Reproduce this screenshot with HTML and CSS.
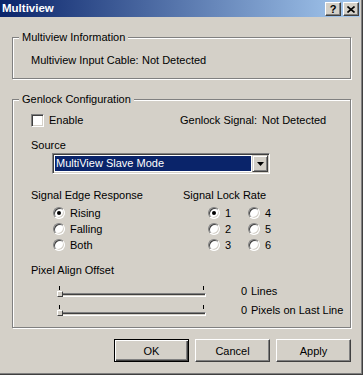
FILE: index.html
```html
<!DOCTYPE html>
<html lang="en">
<head>
    <meta charset="UTF-8">
    <meta name="viewport" content="width=device-width, initial-scale=1.0">
    <title>Multiview</title>
    <link rel="stylesheet" href="styles.css">
</head>
<body>
    <div class="window">
        <div class="titlebar">
            <span class="title">Multiview</span>
            <div class="caption-btns">
                <span class="caption-btn help">?</span>
                <span class="caption-btn close">
                    <svg width="8" height="7" viewBox="0 0 8 7"><path d="M0.5 0.5 L7.5 6.5 M7.5 0.5 L0.5 6.5" stroke="#000" stroke-width="1.6" fill="none"/></svg>
                </span>
            </div>
        </div>

        <div class="content">
            <fieldset class="group info">
                <legend>Multiview Information</legend>
                <div class="status-row">
                    <span class="status-label cable">Multiview Input Cable:</span>
                    <span>Not Detected</span>
                </div>
            </fieldset>

            <fieldset class="group genlock">
                <legend>Genlock Configuration</legend>
                <div class="group-body">
                    <div class="enable-row">
                        <span class="check-item"><span class="checkbox"></span>Enable</span>
                        <span class="status-label signal">Genlock Signal:</span>
                        <span>Not Detected</span>
                    </div>

                    <div class="field-label source-label">Source</div>
                    <div class="combo">
                        <div class="combo-value"><span>MultiView Slave Mode</span></div>
                        <span class="combo-btn">
                            <svg width="7" height="4" viewBox="0 0 7 4"><polygon points="0,0 7,0 3.5,4" fill="#000"/></svg>
                        </span>
                    </div>

                    <div class="options">
                        <div class="option-col edge">
                            <div class="field-label">Signal Edge Response</div>
                            <div class="radio-list">
                                <span class="radio-item"><span class="radio on"></span>Rising</span>
                                <span class="radio-item"><span class="radio"></span>Falling</span>
                                <span class="radio-item"><span class="radio"></span>Both</span>
                            </div>
                        </div>
                        <div class="option-col lock">
                            <div class="field-label">Signal Lock Rate</div>
                            <div class="radio-grid">
                                <span class="radio-item"><span class="radio on"></span>1</span>
                                <span class="radio-item"><span class="radio"></span>4</span>
                                <span class="radio-item"><span class="radio"></span>2</span>
                                <span class="radio-item"><span class="radio"></span>5</span>
                                <span class="radio-item"><span class="radio"></span>3</span>
                                <span class="radio-item"><span class="radio"></span>6</span>
                            </div>
                        </div>
                    </div>

                    <div class="field-label offset-label">Pixel Align Offset</div>
                    <div class="slider-row first">
                        <div class="slider">
                            <div class="ticks"><span></span><span></span></div>
                            <div class="track"><span class="thumb"></span></div>
                        </div>
                        <span class="slider-value">0</span>
                        <span>Lines</span>
                    </div>
                    <div class="slider-row">
                        <div class="slider">
                            <div class="ticks"><span></span><span></span></div>
                            <div class="track"><span class="thumb"></span></div>
                        </div>
                        <span class="slider-value">0</span>
                        <span>Pixels on Last Line</span>
                    </div>
                </div>
            </fieldset>

            <div class="buttons">
                <button class="btn default">OK</button>
                <button class="btn">Cancel</button>
                <button class="btn">Apply</button>
            </div>
        </div>
    </div>
</body>
</html>
```

FILE: styles.css
```css
* {
    box-sizing: border-box;
}
body {
    margin: 0;
    background: #d4d0c8;
    font-family: "Liberation Sans", Arial, sans-serif;
    font-size: 11px;
    line-height: 13px;
    color: #000;
}
.window {
    width: 363px;
    height: 375px;
    border-right: 1px solid #404040;
    border-bottom: 1px solid #404040;
    box-shadow: inset -1px -1px 0 #808080;
}
.titlebar {
    height: 17px;
    margin-right: 2px;
    padding: 0 1px 0 2px;
    display: flex;
    justify-content: space-between;
    background: linear-gradient(to right, #0a246a, #a6caf0);
}
.title {
    color: #fff;
    font-weight: bold;
    font-size: 11.5px;
    line-height: 17px;
}
.caption-btns {
    display: flex;
    gap: 2px;
    padding-top: 2px;
}
.caption-btn {
    width: 16px;
    height: 14px;
    display: flex;
    align-items: center;
    justify-content: center;
    background: #d4d0c8;
    border: 1px solid;
    border-color: #fff #404040 #404040 #fff;
    box-shadow: inset -1px -1px 0 #808080;
    font-weight: bold;
    font-size: 11px;
}
.content {
    padding: 14px 0 0 12px;
}
.group {
    width: 339px;
    margin: 0;
    padding: 0 0 0 6px;
    min-width: 0;
    border: 1px solid #808080;
    box-shadow: 1px 1px 0 #fff, inset 1px 1px 0 #fff;
}
.group legend {
    padding: 0 3px;
    line-height: 13px;
    background: #d4d0c8;
}
.genlock {
    margin-top: 14px;
}
.status-row {
    display: flex;
    padding: 10px 0 11px 12px;
}
.status-label.cable {
    width: 111px;
}
.status-label.signal {
    width: 82px;
}
.group-body {
    padding: 8px 0 10px 12px;
}
.enable-row {
    display: flex;
    align-items: center;
    height: 13px;
}
.check-item {
    width: 149px;
    display: flex;
    align-items: center;
    gap: 5px;
}
.checkbox {
    width: 13px;
    height: 13px;
    background: #fff;
    border: 1px solid;
    border-color: #808080 #fff #fff #808080;
    box-shadow: inset 1px 1px 0 #404040, inset -1px -1px 0 #d4d0c8;
}
.source-label {
    margin-top: 12px;
}
.combo {
    width: 218px;
    height: 21px;
    margin: 1px 0 0 21px;
    padding: 1px;
    display: flex;
    background: #fff;
    border: 1px solid;
    border-color: #808080 #fff #fff #808080;
    box-shadow: inset 1px 1px 0 #404040, inset -1px -1px 0 #d4d0c8;
}
.combo-value {
    flex: 1;
    padding: 1px;
}
.combo-value span {
    display: block;
    height: 100%;
    padding-left: 1px;
    line-height: 15px;
    background: #0a246a;
    color: #fff;
}
.combo-btn {
    width: 16px;
    display: flex;
    align-items: center;
    justify-content: center;
    background: #d4d0c8;
    border: 1px solid;
    border-color: #d4d0c8 #404040 #404040 #d4d0c8;
    box-shadow: inset 1px 1px 0 #fff, inset -1px -1px 0 #808080;
}
.options {
    display: flex;
    margin-top: 15px;
}
.option-col.edge {
    width: 152px;
}
.radio-list {
    margin-top: 3px;
    padding-left: 22px;
}
.radio-grid {
    margin-top: 3px;
    padding-left: 25px;
    display: grid;
    grid-template-columns: 40px 40px;
}
.radio-item {
    height: 16px;
    display: flex;
    align-items: center;
    gap: 5px;
}
.radio {
    width: 12px;
    height: 12px;
    display: flex;
    align-items: center;
    justify-content: center;
    background: #fff;
    border-radius: 50%;
    border: 1px solid;
    border-color: #808080 #fff #fff #808080;
    box-shadow: inset 1px 1px 0 #404040, inset -1px -1px 0 #d4d0c8;
}
.radio.on::after {
    content: "";
    width: 4px;
    height: 4px;
    border-radius: 50%;
    background: #000;
}
.offset-label {
    margin-top: 11px;
}
.slider-row {
    display: flex;
    height: 13px;
    margin-top: 6px;
}
.slider-row.first {
    margin-top: 8px;
}
.slider {
    width: 149px;
    margin-left: 26px;
    margin-right: 35px;
}
.ticks {
    display: flex;
    justify-content: space-between;
    height: 4px;
    margin-top: 1px;
    padding: 0 2px;
}
.ticks span {
    width: 1px;
    background: #000;
}
.track {
    height: 4px;
    margin-top: 3px;
    border: 1px solid;
    border-color: #808080 #fff #fff #808080;
    box-shadow: inset 1px 1px 0 #404040;
}
.thumb {
    display: block;
    width: 6px;
    height: 6px;
    margin: -3px 0 0 -1px;
    background: #d4d0c8;
    border: 1px solid;
    border-color: #fff #404040 #404040 #fff;
}
.slider-value {
    width: 10px;
}
.buttons {
    width: 339px;
    margin-top: 11px;
    display: flex;
    justify-content: flex-end;
    gap: 6px;
}
.btn {
    width: 75px;
    height: 23px;
    padding: 0;
    font-family: inherit;
    font-size: 11px;
    color: #000;
    background: #d4d0c8;
    border: 1px solid;
    border-color: #fff #404040 #404040 #fff;
    box-shadow: inset -1px -1px 0 #808080;
}
.btn.default {
    border-color: #000;
    box-shadow: inset 1px 1px 0 #fff, inset -1px -1px 0 #404040, inset -2px -2px 0 #808080;
}
```
